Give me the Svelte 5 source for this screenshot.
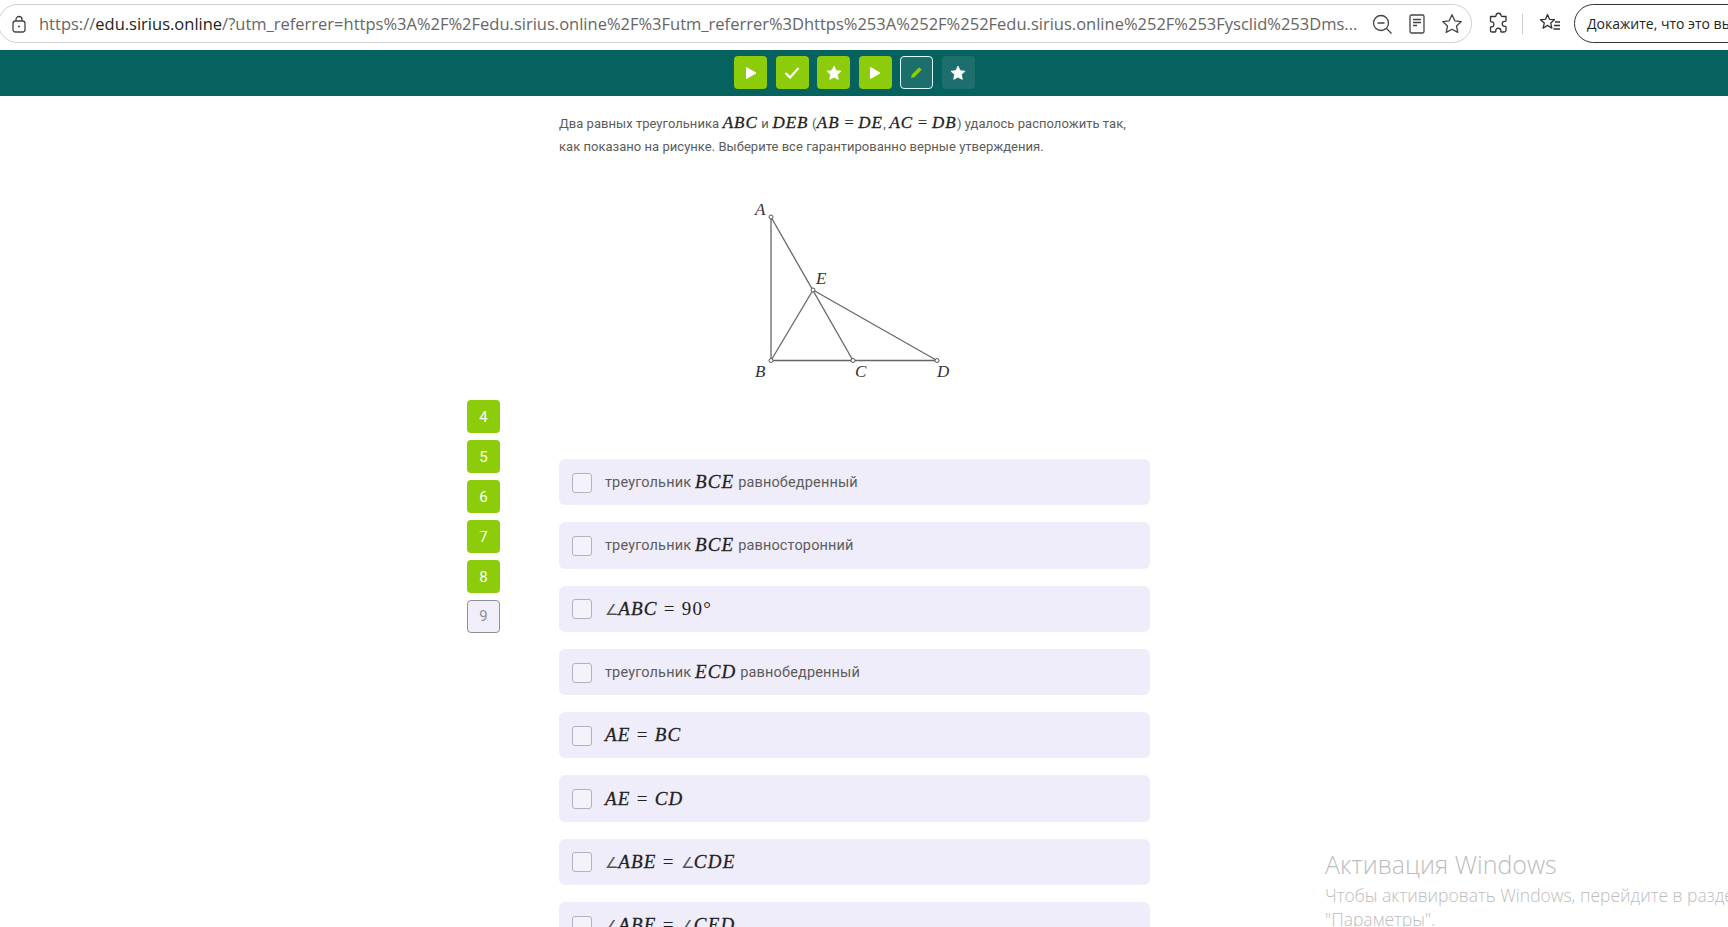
<script>
    const URL_HEAD = 'https://';
    const URL_HOST = 'edu.sirius.online';
    const URL_TAIL = '/?utm_referrer=https%3A%2F%2Fedu.sirius.online%2F%3Futm_referrer%3Dhttps%253A%252F%252Fedu.sirius.online%252F%253Fysclid%253Dms...';

    const steps = ['play', 'check', 'star', 'play', 'pencil', 'star'];
    const sideItems = [4, 5, 6, 7, 8, 9];

    // t = plain text, m = math italic, o = upright math, a = angle sign
    const options = [
        [['t', 'треугольник '], ['m', 'BCE'], ['t', ' равнобедренный']],
        [['t', 'треугольник '], ['m', 'BCE'], ['t', ' равносторонний']],
        [['a', '∠'], ['m', 'ABC'], ['o', ' = 90°']],
        [['t', 'треугольник '], ['m', 'ECD'], ['t', ' равнобедренный']],
        [['m', 'AE'], ['o', ' = '], ['m', 'BC']],
        [['m', 'AE'], ['o', ' = '], ['m', 'CD']],
        [['a', '∠'], ['m', 'ABE'], ['o', ' = '], ['a', '∠'], ['m', 'CDE']],
        [['a', '∠'], ['m', 'ABE'], ['o', ' = '], ['a', '∠'], ['m', 'CED']]
    ];

    const points = [[41, 27], [41, 170.5], [123, 170.5], [207, 170.5], [83, 100]];
    const labels = [
        ['A', 25, 25], ['B', 25, 187], ['C', 125, 187], ['D', 207, 187], ['E', 86, 94]
    ];
</script>

{#snippet parts(list)}
    {#each list as [kind, value]}
        {#if kind === 'm'}<span class="math">{value}</span>{:else if kind === 'o'}<span class="op">{value}</span>{:else if kind === 'a'}<span class="angle">{value}</span>{:else}{value}{/if}
    {/each}
{/snippet}

<div class="page">
    <header class="browser">
        <div class="address">
            <svg class="lock" width="16" height="18" viewBox="0 0 16 18" fill="none" stroke="#444" stroke-width="1.3">
                <rect x="2" y="6" width="12" height="11" rx="2.5" />
                <path d="M5 6V4.500a3 3 0 0 1 6 0V6" />
                <circle cx="8" cy="11.500" r="1" fill="#444" stroke="none" />
            </svg>
            <div class="url">{URL_HEAD}<span class="host">{URL_HOST}</span>{URL_TAIL}</div>
            <div class="address-icons">
                <svg width="22" height="22" viewBox="0 0 22 22" fill="none" stroke="#444" stroke-width="1.3">
                    <circle cx="10" cy="10" r="7.500" />
                    <path d="M6.500 10h7M15.500 15.500l5 5" />
                </svg>
                <svg width="18" height="20" viewBox="0 0 18 20" fill="none" stroke="#444" stroke-width="1.3">
                    <rect x="2" y="1" width="14" height="18" rx="1.500" />
                    <path d="M5 5.500h8M5 8.500h8M5 11.500h4" />
                </svg>
                <svg width="22" height="22" viewBox="0 0 22 22" fill="none" stroke="#444" stroke-width="1.3" stroke-linejoin="round">
                    <path d="M11 1.800l2.800 6 6.500.8-4.800 4.400 1.300 6.400-5.800-3.200-5.800 3.200 1.300-6.400L1.700 8.600l6.500-.8z" />
                </svg>
            </div>
        </div>
        <svg class="puzzle" width="20" height="22" viewBox="0 0 20 22" fill="none" stroke="#333" stroke-width="1.3" stroke-linejoin="round">
            <path d="M7 3.500c0-3 5-3 5 0 0 1 .5 1 2 1h3v4c0 1-1 .8-1.500.8-3 0-3 5 0 5 .5 0 1.500-.2 1.500.7v3.500c0 1-1 1.500-2 1.500h-2.500c-1 0-.7-1-.7-1.500 0-3-5-3-5 0 0 .5.200 1.500-.8 1.500H3c-1 0-1.500-.5-1.500-1.500v-3c0-1 1-.7 1.500-.7 2.500 0 2.500-5 0-5-.5 0-1.500.3-1.500-.8V4.500h4c1 0 1.500 0 1.500-1z" />
        </svg>
        <span class="divider"></span>
        <svg class="fav" width="22" height="20" viewBox="0 0 22 20" fill="none" stroke="#333" stroke-width="1.3" stroke-linejoin="round">
            <path d="M8.500 1.500l2 4.800 5 .4-3.800 3.400 1.200 5.100-4.400-2.800-4.400 2.800 1.200-5.100L1.500 6.700l5-.4zM16 9h5M15 12.500h6M14.500 16h6.500" />
        </svg>
        <div class="pill">Докажите, что это вы</div>
    </header>

    <nav class="steps">
        {#each steps as step, i}
            <button class="step" class:current={i === 4} class:open={i === 5}>
                {#if step === 'play'}
                    <svg width="12" height="14" viewBox="0 0 12 14"><path d="M1.500 1.500L11 7l-9.500 5.500z" fill="#fff" stroke="#fff" stroke-linejoin="round" /></svg>
                {:else if step === 'check'}
                    <svg width="16" height="13" viewBox="0 0 16 13"><path d="M1.500 7l4.500 4.500L14.500 2" fill="none" stroke="#fff" stroke-width="2.200" /></svg>
                {:else if step === 'star'}
                    <svg width="16" height="16" viewBox="0 0 16 16"><path d="M8 1l2.200 4.500 4.900.7-3.600 3.400.9 4.900L8 12.200l-4.400 2.300.9-4.900L.9 6.200l4.900-.7z" fill="#fff" stroke="#fff" stroke-width=".6" stroke-linejoin="round" /></svg>
                {:else}
                    <svg width="13" height="13" viewBox="0 0 12 12"><path d="M1 11l.6-3L8.500 1.200l2.300 2.300L4 10.400z" fill="#8ccc0a" /></svg>
                {/if}
            </button>
        {/each}
    </nav>

    <main class="layout">
        <aside class="side">
            {#each sideItems as n}
                <div class="side-item" class:todo={n === 9}>{n}</div>
            {/each}
        </aside>

        <section class="task">
            <p class="question">
                Два равных треугольника <span class="math">ABC</span> и <span class="math">DEB</span> (<span class="math">AB</span><span class="op">{' = '}</span><span class="math">DE</span>, <span class="math">AC</span><span class="op">{' = '}</span><span class="math">DB</span>) удалось расположить так, как показано на рисунке. Выберите все гарантированно верные утверждения.
            </p>

            <svg class="figure" width="240" height="200" viewBox="0 0 240 200">
                <g stroke="#666" stroke-width="1.3" fill="none">
                    <path d="M41 27V170.500H207L83 100" />
                    <path d="M41 27L123 170.500" />
                    <path d="M41 170.500L83 100" />
                </g>
                {#each points as [x, y]}
                    <circle cx={x} cy={y} r="2" fill="#fff" stroke="#555" stroke-width="1" />
                {/each}
                {#each labels as [name, x, y]}
                    <text {x} {y} class="label">{name}</text>
                {/each}
            </svg>

            <div class="options">
                {#each options as option}
                    <div class="option">
                        <span class="box"></span>
                        <span class="option-text">{@render parts(option)}</span>
                    </div>
                {/each}
            </div>
        </section>
    </main>

    <div class="watermark">
        <div class="wm-title">Активация Windows</div>
        <div class="wm-text">Чтобы активировать Windows, перейдите в раздел<br />"Параметры".</div>
    </div>
</div>

<style>
    :global(body) {
        overflow: hidden;
        background: #fff;
    }

    .page {
        position: relative;
        height: 927px;
        overflow: hidden;
        font-family: Roboto, sans-serif;
    }

    .browser {
        height: 50px;
        box-sizing: border-box;
        padding-top: 4px;
        display: flex;
        align-items: flex-start;
        white-space: nowrap;
        background: #fff;
    }

    .browser > svg {
        flex-shrink: 0;
    }

    .address {
        width: 1474px;
        height: 39px;
        margin-left: -2px;
        box-sizing: border-box;
        border: 1px solid #d0d0d0;
        border-radius: 20px;
        display: flex;
        align-items: center;
        padding-left: 12px;
        flex-shrink: 0;
    }

    .lock {
        flex-shrink: 0;
    }

    .url {
        margin-left: 12px;
        width: 1322px;
        flex-shrink: 0;
        overflow: hidden;
        font-family: "Open Sans", sans-serif;
        font-size: 16.500px;
        color: #666;
    }

    .host {
        color: #222;
    }

    .address-icons {
        display: flex;
        align-items: center;
        gap: 15px;
        margin-left: 10px;
    }

    .puzzle {
        margin: 8px 0 0 17px;
    }

    .divider {
        width: 1px;
        height: 20px;
        flex-shrink: 0;
        background: #ccc;
        margin: 10px 0 0 13px;
    }

    .fav {
        margin: 9px 0 0 16px;
    }

    .pill {
        margin-left: 13px;
        height: 39px;
        box-sizing: border-box;
        width: 240px;
        flex-shrink: 0;
        border: 1px solid #333;
        border-radius: 20px;
        padding-left: 12px;
        line-height: 37px;
        font-family: "Open Sans", sans-serif;
        font-size: 14px;
        color: #222;
    }

    .steps {
        height: 46px;
        background: #05625f;
        display: flex;
        justify-content: center;
        align-items: flex-start;
        gap: 8.500px;
        padding: 6px 19px 0 0;
        box-sizing: border-box;
    }

    .step {
        width: 33px;
        height: 33px;
        padding: 0;
        border: 0;
        border-radius: 4px;
        background: #8ccc0a;
        display: flex;
        align-items: center;
        justify-content: center;
    }

    .step.current {
        background: #1c6f6c;
        border: 1px solid #dff;
    }

    .step.open {
        background: #1c6f6c;
    }

    .layout {
        display: flex;
        padding-left: 467px;
        gap: 59px;
    }

    .side {
        width: 33px;
        margin-top: 304px;
        display: flex;
        flex-direction: column;
        gap: 7px;
    }

    .side-item {
        height: 33px;
        border-radius: 4px;
        background: #8ccc0a;
        color: #fff;
        font-size: 15px;
        line-height: 34px;
        text-align: center;
    }

    .side-item.todo {
        box-sizing: border-box;
        background: #f1eefa;
        border: 1px solid #8f8f98;
        color: #8f8f98;
        line-height: 31px;
    }

    .task {
        width: 591px;
    }

    .question {
        margin: 15px 0 0;
        font-size: 13px;
        letter-spacing: 0.03px;
        line-height: 23px;
        color: #5c5c5c;
        padding-right: 10px;
    }

    .question .math {
        margin: 0 0.3px;
    }

    .math {
        font-family: "Liberation Serif", serif;
        font-style: italic;
        font-size: 17px;
        letter-spacing: 1px;
        color: #222;
        -webkit-text-stroke: 0.3px #222;
    }

    .op {
        font-family: "Liberation Serif", serif;
        font-size: 17px;
        color: #222;
        white-space: pre;
    }

    .angle {
        font-family: "Liberation Serif", serif;
        font-size: 15px;
        color: #555;
    }

    .figure {
        display: block;
        margin: 32px 0 0 171px;
    }

    .label {
        font-family: "Liberation Serif", serif;
        font-style: italic;
        font-size: 17px;
        fill: #333;
    }

    .options {
        margin-top: 69px;
        display: flex;
        flex-direction: column;
        gap: 17px;
    }

    .option {
        height: 46.300px;
        background: #f0edfa;
        border-radius: 6px;
        display: flex;
        align-items: center;
        padding-left: 13px;
        flex-shrink: 0;
    }

    .box {
        width: 20px;
        height: 20px;
        margin-top: 1px;
        box-sizing: border-box;
        background: #f4f2fb;
        border: 1px solid #b5b2be;
        border-radius: 3px;
        flex-shrink: 0;
    }

    .option-text {
        margin-left: 13px;
        font-size: 14.500px;
        letter-spacing: 0.15px;
        color: #5c5c5c;
        white-space: nowrap;
    }

    .option-text .math {
        font-size: 19px;
        letter-spacing: 1.200px;
        vertical-align: -1px;
    }

    .option-text .op {
        font-size: 19px;
        letter-spacing: 1.300px;
        vertical-align: -1px;
    }

    .option-text .angle {
        vertical-align: -1px;
    }

    .watermark {
        position: absolute;
        left: 1325px;
        top: 849px;
        white-space: nowrap;
        font-family: "Open Sans", sans-serif;
        color: #bdbdbd;
    }

    .wm-title {
        font-size: 25px;
        font-weight: 300;
        line-height: 30px;
    }

    .wm-text {
        margin-top: 4px;
        font-size: 17.500px;
        font-weight: 300;
        line-height: 24px;
    }
</style>
